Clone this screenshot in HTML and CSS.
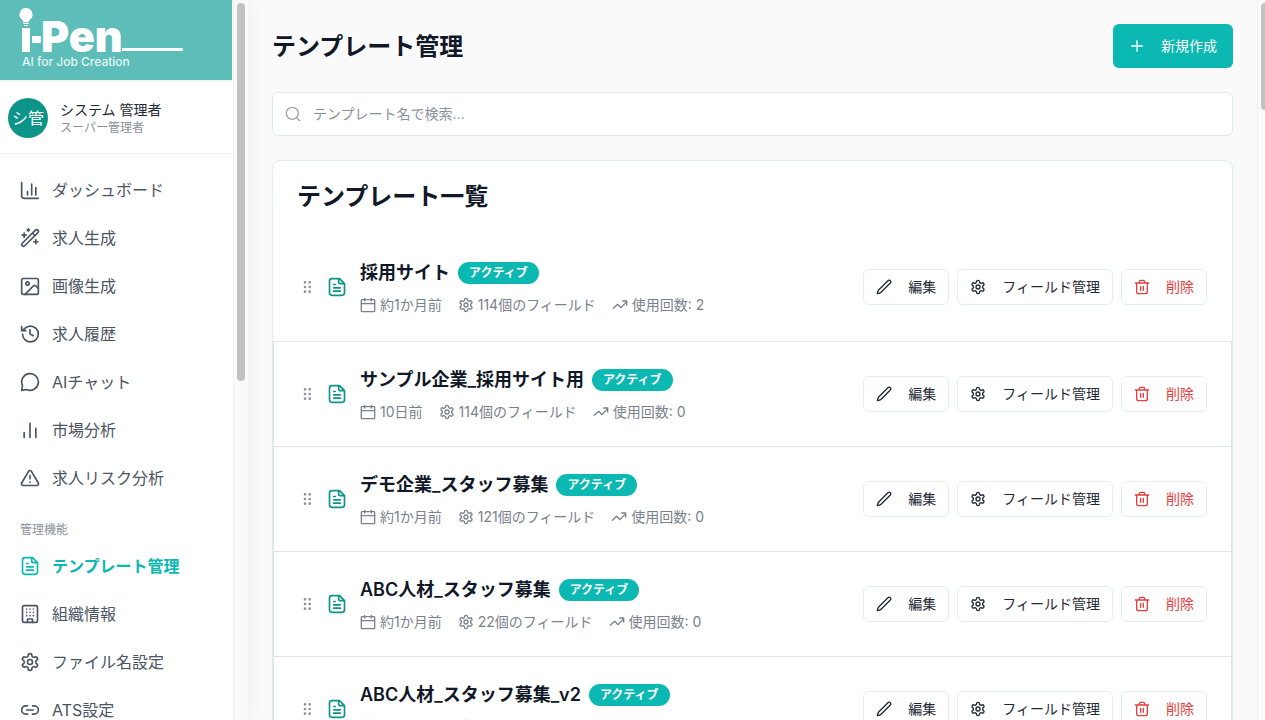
FILE: index.html
```html
<!DOCTYPE html>
<html lang="ja">
<head>
    <meta charset="utf-8">
    <title>テンプレート管理</title>
    <link rel="stylesheet" href="styles.css">
</head>
<body>
<svg class="sprite" aria-hidden="true">
    <symbol id="chart-axis" viewBox="0 0 24 24"><path d="M2 3v16a3 3 0 0 0 3 3h17M19 18V9M14 18V5M9 18v-4"/></symbol>
    <symbol id="wand" viewBox="0 0 24 24"><path d="M21.500 2.500a2 2 0 0 0-3 0L2.700 18.300a2 2 0 0 0 3 3L21.500 5.500a2 2 0 0 0 0-3M15 6l3 3M5 6v5M19 14v5M10 1v3M7.500 8.500h-5M21.500 16.500h-5M11.500 2.500h-3"/></symbol>
    <symbol id="image" viewBox="0 0 24 24"><rect x="2" y="3" width="20" height="19" rx="2"/><circle cx="9" cy="9" r="2"/><path d="m22 15-3.100-3.100a2 2 0 0 0-2.800 0L6 22"/></symbol>
    <symbol id="history" viewBox="0 0 24 24"><path d="M3 12a9.500 9.500 0 1 0 9.500-9.500 9.750 9.750 0 0 0-6.740 2.740L3 8M2 3v5h5M12 7v5l4 2"/></symbol>
    <symbol id="chat" viewBox="0 0 24 24"><path d="M7.900 21A10 10 0 1 0 3 16.100L2 22Z"/></symbol>
    <symbol id="chart" viewBox="0 0 24 24"><path d="M19 21V10M12 21V4M5 21v-6"/></symbol>
    <symbol id="alert" viewBox="0 0 24 24"><path d="m22 18-8.270-14a2 2 0 0 0-3.480 0L2 18a2 2 0 0 0 2 3h16a2 2 0 0 0 2-3M12 9v4M12 17h.01"/></symbol>
    <symbol id="file" viewBox="0 0 24 24"><path d="M15 2H6a3 3 0 0 0-3 3v14a3 3 0 0 0 3 3h12a3 3 0 0 0 3-3V8ZM14 2v4a2 2 0 0 0 2 2h5M10 9H8M16 13H8M16 17H8"/></symbol>
    <symbol id="building" viewBox="0 0 24 24"><rect x="3" y="2" width="18" height="20" rx="2"/><path d="M9 22v-4h6v4M8 6h.01M16 6h.01M12 6h.01M12 10h.01M12 14h.01M16 10h.01M16 14h.01M8 10h.01M8 14h.01"/></symbol>
    <symbol id="gear" viewBox="0 0 24 24"><path d="M12.220 2h-.44a2 2 0 0 0-2 2v.18a2 2 0 0 1-1 1.730l-.43.25a2 2 0 0 1-2 0l-.15-.08a2 2 0 0 0-2.730.73l-.22.38a2 2 0 0 0 .73 2.730l.15.1a2 2 0 0 1 1 1.720v.51a2 2 0 0 1-1 1.740l-.15.09a2 2 0 0 0-.73 2.730l.22.38a2 2 0 0 0 2.730.73l.15-.08a2 2 0 0 1 2 0l.43.25a2 2 0 0 1 1 1.730V20a2 2 0 0 0 2 2h.44a2 2 0 0 0 2-2v-.18a2 2 0 0 1 1-1.730l.43-.25a2 2 0 0 1 2 0l.15.08a2 2 0 0 0 2.730-.73l.22-.39a2 2 0 0 0-.73-2.730l-.15-.08a2 2 0 0 1-1-1.740v-.5a2 2 0 0 1 1-1.740l.15-.09a2 2 0 0 0 .73-2.730l-.22-.38a2 2 0 0 0-2.730-.73l-.15.08a2 2 0 0 1-2 0l-.43-.25a2 2 0 0 1-1-1.730V4a2 2 0 0 0-2-2z"/><circle cx="12" cy="12" r="3"/></symbol>
    <symbol id="link" viewBox="0 0 24 24"><path d="M9 17H7A5 5 0 0 1 7 7h2M15 7h2a5 5 0 1 1 0 10h-2M8 12h8"/></symbol>
    <symbol id="plus" viewBox="0 0 24 24"><path d="M4 12h16M12 4v16"/></symbol>
    <symbol id="search" viewBox="0 0 24 24"><circle cx="11" cy="11" r="9"/><path d="m22 22-4.300-4.300"/></symbol>
    <symbol id="grip" viewBox="0 0 24 24"><circle cx="9" cy="5" r="1"/><circle cx="16" cy="5" r="1"/><circle cx="9" cy="12" r="1"/><circle cx="16" cy="12" r="1"/><circle cx="9" cy="19" r="1"/><circle cx="16" cy="19" r="1"/></symbol>
    <symbol id="calendar" viewBox="0 0 24 24"><path d="M7 2v4M17 2v4M2 10h20"/><rect x="2" y="4" width="20" height="18" rx="1"/></symbol>
    <symbol id="trend" viewBox="0 0 24 24"><path d="m22 7-8.500 9-5-5L2 17M16 6h6v6"/></symbol>
    <symbol id="pencil" viewBox="0 0 24 24"><path d="M21.500 2.500a2.500 2.500 0 0 0-3.600 0L4 16.400c-1 1-1.500 2.500-2 5.600 3.100-.5 4.600-1 5.600-2L21.500 6.100a2.500 2.500 0 0 0 0-3.600z"/></symbol>
    <symbol id="trash" viewBox="0 0 24 24"><path d="M2 6h20M20 6v13a3 3 0 0 1-3 3H7a3 3 0 0 1-3-3V6M8 6V4a2 2 0 0 1 2-2h4a2 2 0 0 1 2 2v2M10 11v6M14 11v6"/></symbol>
</svg>
<div class="app">
    <aside class="sidebar">
        <div class="sidebar-content">
            <a class="logo" href="#">
                <svg class="logo-image" viewBox="0 0 232 80" role="img" aria-label="i-Pen AI for Job Creation">
                    <path d="M26 8a6.500 6.500 0 0 0-4 11.600l1.500 2.600h5l1.500-2.600A6.500 6.500 0 0 0 26 8zM23 23h6v1h-6zM24 25h4v1h-4zM22 28h8v24h-8zM32 36h9v7h-9zM122 48h61v3h-61z" fill="#fff"/>
                    <text class="logo-name" x="41" y="52">Pen</text>
                    <text class="logo-tagline" x="22" y="66">AI for Job Creation</text>
                </svg>
            </a>
            <div class="user">
                <span class="avatar">シ管</span>
                <div>
                    <div class="user-name">システム 管理者</div>
                    <div class="user-role">スーパー管理者</div>
                </div>
            </div>
            <nav class="nav">
                <a href="#"><svg class="icon"><use href="#chart-axis"/></svg>ダッシュボード</a>
                <a href="#"><svg class="icon"><use href="#wand"/></svg>求人生成</a>
                <a href="#"><svg class="icon"><use href="#image"/></svg>画像生成</a>
                <a href="#"><svg class="icon"><use href="#history"/></svg>求人履歴</a>
                <a href="#"><svg class="icon"><use href="#chat"/></svg>AIチャット</a>
                <a href="#"><svg class="icon"><use href="#chart"/></svg>市場分析</a>
                <a href="#"><svg class="icon"><use href="#alert"/></svg>求人リスク分析</a>
                <div class="nav-title">管理機能</div>
                <a class="active" href="#"><svg class="icon"><use href="#file"/></svg>テンプレート管理</a>
                <a href="#"><svg class="icon"><use href="#building"/></svg>組織情報</a>
                <a href="#"><svg class="icon"><use href="#gear"/></svg>ファイル名設定</a>
                <a href="#"><svg class="icon"><use href="#link"/></svg>ATS設定</a>
            </nav>
        </div>
        <div class="scrollbar"><div class="thumb"></div></div>
    </aside>
    <main class="main">
        <header class="page-header">
            <h1>テンプレート管理</h1>
            <button class="btn-create" type="button"><svg class="icon-sm"><use href="#plus"/></svg>新規作成</button>
        </header>
        <label class="search">
            <svg class="icon-sm"><use href="#search"/></svg>
            <input type="text" placeholder="テンプレート名で検索..." aria-label="テンプレート名で検索">
        </label>
        <section class="card">
            <h2>テンプレート一覧</h2>
            <div class="row">
                <svg class="icon-sm grip"><use href="#grip"/></svg>
                <svg class="icon file"><use href="#file"/></svg>
                <div class="info">
                    <div class="name"><h3>採用サイト</h3><span class="badge">アクティブ</span></div>
                    <div class="meta">
                        <span><svg class="icon-sm"><use href="#calendar"/></svg>約1か月前</span>
                        <span><svg class="icon-sm"><use href="#gear"/></svg>114個のフィールド</span>
                        <span><svg class="icon-sm"><use href="#trend"/></svg>使用回数: 2</span>
                    </div>
                </div>
                <div class="actions">
                    <button type="button"><svg class="icon-sm"><use href="#pencil"/></svg>編集</button>
                    <button type="button"><svg class="icon-sm"><use href="#gear"/></svg>フィールド管理</button>
                    <button class="delete" type="button"><svg class="icon-sm"><use href="#trash"/></svg>削除</button>
                </div>
            </div>
            <div class="row">
                <svg class="icon-sm grip"><use href="#grip"/></svg>
                <svg class="icon file"><use href="#file"/></svg>
                <div class="info">
                    <div class="name"><h3>サンプル企業_採用サイト用</h3><span class="badge">アクティブ</span></div>
                    <div class="meta">
                        <span><svg class="icon-sm"><use href="#calendar"/></svg>10日前</span>
                        <span><svg class="icon-sm"><use href="#gear"/></svg>114個のフィールド</span>
                        <span><svg class="icon-sm"><use href="#trend"/></svg>使用回数: 0</span>
                    </div>
                </div>
                <div class="actions">
                    <button type="button"><svg class="icon-sm"><use href="#pencil"/></svg>編集</button>
                    <button type="button"><svg class="icon-sm"><use href="#gear"/></svg>フィールド管理</button>
                    <button class="delete" type="button"><svg class="icon-sm"><use href="#trash"/></svg>削除</button>
                </div>
            </div>
            <div class="row">
                <svg class="icon-sm grip"><use href="#grip"/></svg>
                <svg class="icon file"><use href="#file"/></svg>
                <div class="info">
                    <div class="name"><h3>デモ企業_スタッフ募集</h3><span class="badge">アクティブ</span></div>
                    <div class="meta">
                        <span><svg class="icon-sm"><use href="#calendar"/></svg>約1か月前</span>
                        <span><svg class="icon-sm"><use href="#gear"/></svg>121個のフィールド</span>
                        <span><svg class="icon-sm"><use href="#trend"/></svg>使用回数: 0</span>
                    </div>
                </div>
                <div class="actions">
                    <button type="button"><svg class="icon-sm"><use href="#pencil"/></svg>編集</button>
                    <button type="button"><svg class="icon-sm"><use href="#gear"/></svg>フィールド管理</button>
                    <button class="delete" type="button"><svg class="icon-sm"><use href="#trash"/></svg>削除</button>
                </div>
            </div>
            <div class="row">
                <svg class="icon-sm grip"><use href="#grip"/></svg>
                <svg class="icon file"><use href="#file"/></svg>
                <div class="info">
                    <div class="name"><h3>ABC人材_スタッフ募集</h3><span class="badge">アクティブ</span></div>
                    <div class="meta">
                        <span><svg class="icon-sm"><use href="#calendar"/></svg>約1か月前</span>
                        <span><svg class="icon-sm"><use href="#gear"/></svg>22個のフィールド</span>
                        <span><svg class="icon-sm"><use href="#trend"/></svg>使用回数: 0</span>
                    </div>
                </div>
                <div class="actions">
                    <button type="button"><svg class="icon-sm"><use href="#pencil"/></svg>編集</button>
                    <button type="button"><svg class="icon-sm"><use href="#gear"/></svg>フィールド管理</button>
                    <button class="delete" type="button"><svg class="icon-sm"><use href="#trash"/></svg>削除</button>
                </div>
            </div>
            <div class="row">
                <svg class="icon-sm grip"><use href="#grip"/></svg>
                <svg class="icon file"><use href="#file"/></svg>
                <div class="info">
                    <div class="name"><h3>ABC人材_スタッフ募集_v2</h3><span class="badge">アクティブ</span></div>
                    <div class="meta">
                        <span><svg class="icon-sm"><use href="#calendar"/></svg>約1か月前</span>
                        <span><svg class="icon-sm"><use href="#gear"/></svg>22個のフィールド</span>
                        <span><svg class="icon-sm"><use href="#trend"/></svg>使用回数: 0</span>
                    </div>
                </div>
                <div class="actions">
                    <button type="button"><svg class="icon-sm"><use href="#pencil"/></svg>編集</button>
                    <button type="button"><svg class="icon-sm"><use href="#gear"/></svg>フィールド管理</button>
                    <button class="delete" type="button"><svg class="icon-sm"><use href="#trash"/></svg>削除</button>
                </div>
            </div>
        </section>
    </main>
    <div class="scrollbar page-scrollbar"><div class="thumb"></div></div>
</div>
</body>
</html>
```
FILE: styles.css
```css
* {
box-sizing: border-box;
}
body {
margin: 0;
font-family: Inter, "Noto Sans CJK JP", sans-serif;
font-size: 16px;
line-height: 24px;
color: #111827;
background-color: #fafafa;
}
h1, h2, h3 {
margin: 0;
font-weight: 600;
}
a {
color: inherit;
text-decoration: none;
}
button, input {
font: inherit;
color: inherit;
}
button {
display: flex;
align-items: center;
cursor: pointer;
white-space: nowrap;
}
.sprite {
display: none;
}
.icon, .icon-sm {
flex: none;
width: 20px;
height: 20px;
fill: none;
stroke: currentColor;
stroke-width: 2;
stroke-linecap: round;
stroke-linejoin: round;
}
.icon-sm {
width: 16px;
height: 16px;
}
.app {
display: flex;
height: 100vh;
overflow: hidden;
}

/* sidebar */
.sidebar {
flex: none;
display: flex;
width: 248px;
background-color: #fff;
box-shadow: 0 0 16px rgba(15, 23, 42, 0.06);
}
.sidebar-content {
flex: 1;
overflow: hidden;
border-right: 1px solid #eef0f2;
}
.logo {
display: block;
height: 82px;
border-bottom: 2px solid #f3f4f6;
}
.logo-image {
display: block;
width: 232px;
height: 80px;
background-color: #5dbdb9;
}
.logo-name {
font-family: Inter, sans-serif;
font-size: 43px;
font-weight: 900;
fill: #fff;
}
.logo-tagline {
font-family: Inter, sans-serif;
font-size: 12px;
font-weight: 500;
fill: #e4f7f5;
}
.user {
display: flex;
align-items: center;
gap: 12px;
height: 72px;
padding: 0 8px;
border-bottom: 1px solid #eef0f2;
}
.avatar {
display: flex;
align-items: center;
justify-content: center;
width: 40px;
height: 40px;
border-radius: 50%;
color: #fff;
background-color: #0d9488;
}
.user-name {
font-size: 14px;
line-height: 20px;
color: #1f2937;
}
.user-role {
font-size: 12px;
line-height: 16px;
color: #8b919b;
}
.nav {
padding: 12px 8px;
}
.nav a {
display: flex;
align-items: center;
gap: 12px;
height: 48px;
padding: 0 12px;
color: #4b5563;
}
.nav .active {
color: #0cb8b2;
font-weight: 700;
}
.nav-title {
padding: 20px 12px 4px;
font-size: 12px;
line-height: 16px;
color: #8b919b;
}
.scrollbar {
flex: none;
width: 14px;
padding: 3px;
background-color: #fafafa;
}
.thumb {
height: 53%;
border-radius: 4px;
background-color: #c1c1c3;
}

/* main */
.main {
flex: 1;
min-width: 0;
padding: 24px;
}
.page-scrollbar {
width: 8px;
padding-right: 0;
border-left: 1px solid #eeeeee;
}
.page-scrollbar .thumb {
height: 15%;
border-radius: 4px 0 0 4px;
}
.page-header {
display: flex;
align-items: center;
justify-content: space-between;
margin-bottom: 24px;
}
h1, h2 {
font-size: 24px;
line-height: 24px;
}
h1 {
padding-top: 2px;
}
.btn-create {
gap: 16px;
height: 44px;
padding: 0 16px;
border: 0;
border-radius: 6px;
font-size: 14px;
color: #fff;
background-color: #0cb8b2;
}
.search {
display: flex;
align-items: center;
gap: 12px;
height: 44px;
margin-bottom: 24px;
padding: 0 12px;
border: 1px solid #dcebe9;
border-radius: 6px;
color: #9ca3af;
background-color: #fff;
}
.search input {
flex: 1;
padding: 0;
border: 0;
outline: 0;
font-size: 14px;
color: #111827;
background: none;
}
.search input::placeholder {
color: #8b919b;
}
.card {
border: 1px solid #e0ebea;
border-radius: 8px;
background-color: #fff;
}
.card h2 {
padding: 24px 24px 23px;
}
.row {
display: flex;
align-items: center;
height: 105px;
padding: 0 24px;
border: 1px solid #e2e5e8;
border-top: 0;
}
.row:nth-of-type(1) {
height: 110px;
border-width: 0 0 1px;
padding: 0 25px;
}
.grip {
margin: 0 12px 0 1px;
color: #8b919b;
}
.file {
margin-right: 13px;
color: #0d9488;
}
.info {
flex: 1;
min-width: 0;
}
.name {
display: flex;
align-items: center;
gap: 8px;
margin-bottom: 8px;
}
h3 {
font-size: 18px;
line-height: 28px;
}
.badge {
padding: 3px 11px;
border-radius: 11px;
font-size: 12px;
line-height: 16px;
font-weight: 600;
color: #fff;
background-color: #0cb8b2;
}
.meta {
display: flex;
gap: 16px;
font-size: 14px;
line-height: 20px;
color: #7b818c;
}
.meta span {
display: flex;
align-items: center;
gap: 4px;
}
.actions {
display: flex;
gap: 8px;
}
.actions button {
gap: 16px;
height: 36px;
padding: 0 12px;
border: 1px solid #e3eeed;
border-radius: 6px;
font-size: 14px;
color: #1f2937;
background-color: #fff;
}
.actions .delete {
color: #e53e3e;
}
```
